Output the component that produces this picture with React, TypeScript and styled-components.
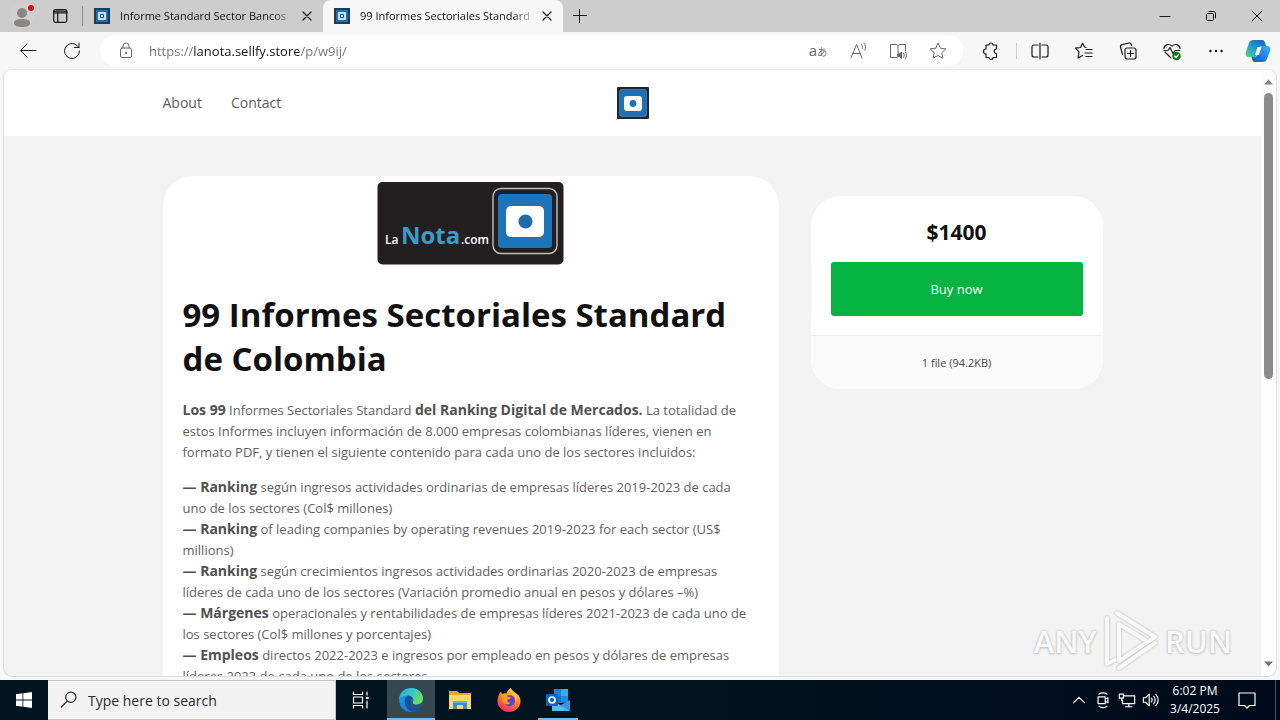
import React from "react";
import styled, { createGlobalStyle } from "styled-components";

const Global = createGlobalStyle`
  *, *::before, *::after { box-sizing: border-box; }
  html, body, #root { height: 100%; margin: 0; }
  body { font-family: "Open Sans", "Noto Sans", sans-serif; font-size: 13px; color: #5a5a5a; overflow: hidden; }
  button, input { font: inherit; color: inherit; border: 0; padding: 0; margin: 0; background: none; }
  p, h1, h2, ul { margin: 0; padding: 0; }
  svg { display: block; flex: none; }
`;

const Desktop = styled.div`
  height: 100vh;
  display: flex;
  flex-direction: column;
  background: #f7f7f7;
`;

/* Browser frame */
const TabStrip = styled.header`
  flex: none;
  height: 32px;
  display: flex;
  background: #cdcdcd;
  color: #111;
`;
const IconButton = styled.button<{ $w?: number; $color?: string }>`
  width: ${(p) => p.$w ?? 40}px;
  flex: none;
  align-self: stretch;
  display: flex;
  align-items: center;
  justify-content: center;
  color: ${(p) => p.$color ?? "#1b1b1b"};
`;
const Rule = styled.span<{ $h: number; $color: string }>`
  width: 1px;
  height: ${(p) => p.$h}px;
  flex: none;
  align-self: center;
  background: ${(p) => p.$color};
`;
const Tab = styled.div<{ $active?: boolean }>`
  width: 240px;
  display: flex;
  align-items: center;
  padding: 0 6px 0 11px;
  border-radius: 8px 8px 0 0;
  background: ${(p) => (p.$active ? "#f7f7f7" : "transparent")};
`;
const TabTitle = styled.button`
  flex: 1;
  min-width: 0;
  margin-left: 10px;
  text-align: left;
  font-size: 11px;
  line-height: 16px;
  white-space: nowrap;
  overflow: hidden;
  mask-image: linear-gradient(to right, #000 86%, transparent);
`;
const Spacer = styled.div<{ $w?: number }>`
  flex: ${(p) => (p.$w ? `0 0 ${p.$w}px` : "1")};
`;
const Toolbar = styled.div`
  flex: none;
  height: 37px;
  display: flex;
  align-items: center;
  padding: 0 2px 0 6px;
`;
const AddressBar = styled.label`
  flex: 1;
  height: 31px;
  margin: 0 6px;
  padding: 0 5px 0 12px;
  display: flex;
  align-items: center;
  background: #fff;
  border-radius: 16px;
`;
const AddressInput = styled.input`
  flex: 1;
  min-width: 0;
  margin-left: 9px;
  height: 20px;
  font-size: 13px;
  outline: none;
  color: transparent;
  background: linear-gradient(to right, #707070 45px, #111 45px, #111 150px, #707070 150px);
  background-clip: text;
  -webkit-background-clip: text;
`;
const TranslateGlyph = styled.span`
  font-size: 15px;
  line-height: 20px;
  small { font-family: "Noto Sans CJK JP", sans-serif; font-size: 10px; }
`;

/* Page */
const Viewport = styled.div`
  flex: 1;
  min-height: 0;
  margin: 0 3px 3px;
  display: flex;
  border: 1px solid #dedede;
  border-top-color: #ececec;
  border-radius: 9px;
  overflow: hidden;
  background: #f3f3f3;
`;
const Page = styled.div`
  flex: 1;
  min-width: 0;
  overflow: hidden;
`;
const Container = styled.div`
  max-width: 940px;
  margin: 0 auto;
`;
const SiteHeader = styled.div`
  background: #fff;
`;
const SiteNav = styled(Container).attrs({ as: "nav" })`
  height: 66px;
  display: grid;
  grid-template-columns: 1fr auto 1fr;
  align-items: center;
`;
const NavLinks = styled.div`
  display: flex;
  gap: 29px;
`;
const NavLink = styled.a`
  color: #5c5c5c;
  font-size: 14px;
  text-decoration: none;
  line-height: 20px;
`;
const Content = styled(Container).attrs({ as: "main" })`
  padding-top: 40px;
  display: grid;
  grid-template-columns: minmax(0, 1fr) 292px;
  gap: 32px;
  align-items: start;
`;
const Article = styled.article`
  padding: 5px 20px 40px;
  background: #fff;
  border-radius: 30px;
`;
const LogoFrame = styled.div`
  display: flex;
  justify-content: center;
`;
const Title = styled.h1`
  margin: 28px 0 19px;
  font-size: 33px;
  line-height: 44px;
  font-weight: 700;
  color: #111;
`;
const Text = styled.p`
  margin-bottom: 14px;
  line-height: 21px;
  color: #5f5f5f;
  strong { font-size: 14px; line-height: 14px; font-weight: 700; color: #505050; }
`;
const BuyCard = styled.aside`
  margin-top: 20px;
  background: #fff;
  border-radius: 30px;
  overflow: hidden;
  text-align: center;
`;
const BuyBody = styled.div`
  padding: 22px 20px 19px;
`;
const Price = styled.h2`
  font-size: 21px;
  line-height: 28px;
  color: #111;
`;
const BuyButton = styled.button`
  width: 100%;
  height: 54px;
  margin-top: 16px;
  border-radius: 3px;
  background: #04b340;
  color: #fff;
`;
const BuyFooter = styled.div`
  padding: 17px 0 16px;
  border-top: 1px solid #eee;
  background: #fafafa;
  font-size: 11px;
  line-height: 20px;
  color: #444;
`;
const Scrollbar = styled.div`
  width: 15px;
  flex: none;
  display: flex;
  flex-direction: column;
  align-items: center;
  padding: 9px 0;
  background: #fcfcfc;
`;
const Track = styled.div`
  flex: 1;
  width: 9px;
  margin: 8px 0;
`;
const Thumb = styled.div`
  height: 51%;
  border-radius: 5px;
  background: #8b8b8b;
`;

const Watermark = styled.div`
  position: absolute;
  right: 48px;
  bottom: 48px;
  display: flex;
  align-items: center;
  gap: 6px;
  font-family: "Open Sans", sans-serif;
  font-size: 31px;
  font-weight: 600;
  line-height: 62px;
  color: #f9f9f9;
  text-shadow: 0 0 2px #b8b8b8, 0 1px 3px #c4c4c4;
  pointer-events: none;
  svg { filter: drop-shadow(0 0 1px #b0b0b0); }
`;

/* Taskbar */
const Taskbar = styled.footer`
  flex: none;
  height: 40px;
  display: flex;
  background: linear-gradient(to right, #00151f, #00131f 55%, #000a1b);
  color: #fff;
`;
const SearchBox = styled.label`
  width: 288px;
  display: flex;
  align-items: center;
  padding-left: 12px;
  background: #f2f2f2;
  border: 1px solid #c6c6c6;
  border-left: 0;
  color: #222;
`;
const SearchInput = styled.input`
  flex: 1;
  min-width: 0;
  margin-left: 10px;
  font-size: 14px;
  outline: none;
  &::placeholder { color: #2a2a2a; opacity: 1; }
`;
const TaskButton = styled.button<{ $w?: number; $active?: boolean; $open?: boolean }>`
  width: ${(p) => p.$w ?? 49}px;
  display: flex;
  align-items: center;
  justify-content: center;
  background: ${(p) => (p.$active ? "#35474f" : "transparent")};
  box-shadow: ${(p) => (p.$active || p.$open ? "inset 0 -2px #76b9ed" : "none")};
  margin: ${(p) => (p.$open ? "0 5px" : "0")};
`;
const Clock = styled.button`
  width: 64px;
  font-size: 12px;
  line-height: 18px;
  color: #fff;
`;

type P = { d: React.ReactNode; s?: number; w?: number; fill?: string };
const Ico = ({ d, s = 20, w = 1, fill = "none" }: P) => (
  <svg width={s} height={s} viewBox="0 0 20 20" fill={fill} stroke="currentColor" strokeWidth={w} strokeLinejoin="round" strokeLinecap="round" aria-hidden="true">
    {d}
  </svg>
);

const Brand = ({ size }: { size: number }) => (
  <svg width={size} height={size} viewBox="0 0 32 32" aria-hidden="true">
    <rect width="32" height="32" rx="1" fill="#20252c" />
    <rect x="2.5" y="2.5" width="27" height="27" rx="2" fill="#1d70b5" stroke="#4d88b8" strokeWidth=".7" />
    <rect x="7" y="9" width="18" height="15" rx="3" fill="#fff" />
    <circle cx="16" cy="16.5" r="3.4" fill="#1d70b5" />
  </svg>
);
const Favicon = () => (
  <svg width="16" height="16" viewBox="0 0 16 16" aria-hidden="true">
    <rect width="16" height="16" fill="#1c3c5c" />
    <rect x="2" y="2" width="12" height="12" fill="#2a6ea6" />
    <rect x="4" y="4" width="8" height="8" rx="1" fill="#bfe3f5" />
    <rect x="6" y="6" width="4" height="4" fill="#1d5f96" />
    <rect x="7" y="7" width="2" height="2" fill="#e8f6fc" />
  </svg>
);

const LaNota = () => (
  <svg width="188" height="84" viewBox="0 0 188 84" role="img" aria-label="La Nota.com">
    <rect x=".5" y="1" width="186" height="82.500" rx="5" fill="#231f20" />
    <g fontFamily='"Open Sans", sans-serif'>
      <text x="8" y="63" fontSize="12" fill="#fff" fontWeight="600">La</text>
      <text x="24" y="63" fontSize="24" fill="#3a9cc8" fontWeight="700">Nota</text>
      <text x="84" y="63" fontSize="12" fill="#fff" fontWeight="600">.com</text>
    </g>
    <rect x="116" y="7.500" width="64" height="65" rx="8" fill="none" stroke="#c4bfbc" strokeWidth="1.4" />
    <rect x="121" y="13" width="54" height="54" rx="4" fill="#1c75bb" />
    <rect x="129" y="25" width="38" height="31" rx="5" fill="#fff" />
    <circle cx="148.500" cy="40.500" r="7" fill="#1f6ba8" />
  </svg>
);

const Copilot = () => (
  <svg width="26" height="24" viewBox="0 0 26 24" aria-hidden="true">
    <defs>
      <linearGradient id="cpA" x1="0" y1="1" x2="1" y2="0"><stop offset="0" stopColor="#5bd68a" /><stop offset=".45" stopColor="#1f9fd0" /><stop offset="1" stopColor="#1657c0" /></linearGradient>
      <linearGradient id="cpB" x1="0" y1="1" x2="1" y2="0"><stop offset="0" stopColor="#1554cf" /><stop offset=".6" stopColor="#2589ee" /><stop offset="1" stopColor="#39b7f2" /></linearGradient>
    </defs>
    <path d="M8 1h9c2 0 2.500 1 3 3l1 3h-4c-2 0-3 1-3.500 3l-1.500 5c-.6 2-1.500 3-3.500 3H4c-3 0-4-2-3-5L4 4c.7-2 2-3 4-3z" fill="url(#cpA)" />
    <path d="M18 23H10c-2 0-2.500-1-3-3l-.6-2H9c2 0 3-1 3.500-3L14 10c.6-2 1.500-3 3.500-3H22c3 0 4 2 3 5l-3 8c-.7 2-2 3-4 3z" fill="url(#cpB)" />
    <path d="M12.500 8h4l-2.600 8h-4z" fill="#f7f7f7" />
  </svg>
);

const Edge = () => (
  <svg width="24" height="24" viewBox="0 0 24 24" aria-hidden="true">
    <defs>
      <linearGradient id="eA" x1="0" y1="0" x2="1" y2=".6"><stop offset="0" stopColor="#2aa5e0" /><stop offset=".5" stopColor="#35c7c8" /><stop offset="1" stopColor="#6be05a" /></linearGradient>
      <linearGradient id="eB" x1="0" y1="0" x2="1" y2="1"><stop offset="0" stopColor="#1b9de2" /><stop offset="1" stopColor="#1173cf" /></linearGradient>
    </defs>
    <circle cx="12" cy="12" r="12" fill="url(#eB)" />
    <path d="M0 11C1 4 6 0 12 0c7 0 12 5 12 10.500 0 4-3 6-6.500 6-3 0-4.500-1-3.500-2.500 2-3-1-6.500-5-6.500C5 7.500 1.500 8.500 0 11z" fill="url(#eA)" />
    <path d="M9 7.500c-3 2-4 5-3 8.500 1 4 4 7 8 8 4-.6 7-2.500 8.500-5.500-4 2-10 1.500-11-3-.5-2 .2-3.500 2.500-4.500-.8-2-2.700-3.500-5-3.500z" fill="#13509f" />
    <path d="M14 14c-1 1.500.5 3 4.500 2.600 2-.3 4-1.500 5-3.600-.1 2-.5 4-1.500 5.500-4 2-10 1.500-11-3-.3-1.300 0-2.500 1-3.500z" fill="#35474f" opacity=".75" />
  </svg>
);
const Explorer = () => (
  <svg width="24" height="20" viewBox="0 0 24 20" aria-hidden="true">
    <path d="M1 1h8l2 2h12v16H1z" fill="#e8a823" />
    <path d="M1 5h22v14H1z" fill="#fbd66c" />
    <path d="M5 19v-8h14v8h-4v-4H9v4z" fill="#3c8dcb" />
    <path d="M5 11h14v2H5z" fill="#63b0e3" />
  </svg>
);
const Firefox = () => (
  <svg width="24" height="24" viewBox="0 0 24 24" aria-hidden="true">
    <defs>
      <linearGradient id="fA" x1=".8" y1="0" x2=".3" y2="1"><stop offset="0" stopColor="#ffe03a" /><stop offset=".45" stopColor="#ff8a22" /><stop offset="1" stopColor="#f5255e" /></linearGradient>
    </defs>
    <path d="M14 0c1 3 4 4 6 6 2 1.500 3.500 4 3.500 7C23.500 19 18.500 24 12 24S.5 19 .5 13C.5 9 2 6 4 3.500L5 6c1.500-1 3-1 4.500-.6C10 3 12 1 14 0z" fill="url(#fA)" />
    <circle cx="12.500" cy="12.500" r="5.500" fill="#6a3fc8" />
    <path d="M4 7c3-1 6 0 7 2l3 .5c-.5 1.500-2 2-3.500 2-1 2 1 3.500 3 3-1 2-5 2.500-7 0C5 12 4.500 9 4 7z" fill="#ff9a25" />
    <path d="M14 5c3 1.500 5 4 4.500 8 1-1 1.500-3 1-5-1-2-3-3-5.500-3z" fill="#ffd53a" />
  </svg>
);
const Outlook = () => (
  <svg width="24" height="22" viewBox="0 0 24 22" aria-hidden="true">
    <path d="M8 0h14v14H8z" fill="#1a6fc0" />
    <path d="M15 0h7v7h-7z" fill="#35aeea" />
    <path d="M8 0h7v7H8z" fill="#1b84d6" />
    <path d="M15 7h7v6h-7z" fill="#1c8ee0" />
    <path d="M6 12l9 4 9-5v9.500c0 1-.6 1.500-1.500 1.500h-15C6.500 22 6 21.500 6 20.500z" fill="#2c9de4" />
    <path d="M6 12l17 9.600c-.2.300-.5.400-1 .4h-14.500C6.500 22 6 21.500 6 20.500z" fill="#50c1f2" />
    <rect y="5" width="12" height="12" rx="1" fill="#0f64b8" />
    <circle cx="6" cy="11" r="3" fill="none" stroke="#fff" strokeWidth="1.700" />
  </svg>
);

const close = <path d="M6 6l8 8M14 6l-8 8" />;
const star = "M10 2.200l2.400 5 5.400.7-4 3.800 1 5.500L10 14.500l-4.800 2.700 1-5.500-4-3.800 5.400-.7z";

export default function App() {
  return (
    <Desktop>
      <Global />
      <TabStrip>
        <IconButton $w={43} aria-label="Profile">
          <svg width="26" height="26" viewBox="0 0 26 26" aria-hidden="true">
            <circle cx="13" cy="12" r="13" fill="#d2d0cf" />
            <circle cx="13" cy="10" r="5" fill="#8b8785" />
            <path d="M5 20c0-3 3-4 8-4s8 1 8 4-3 4-8 4-8-1-8-4z" fill="#8b8785" />
            <circle cx="22" cy="5" r="3" fill="#d90d1e" />
          </svg>
        </IconButton>
        <IconButton $w={34} aria-label="Workspaces">
          <Ico s={18} w={1.4} d={<><rect x="3" y="3" width="14.500" height="14" rx="2" /><path d="M3 4.500h14.500v2H3zM7.500 6v11" /></>} />
        </IconButton>
        <Spacer $w={5} />
        <Rule $h={20} $color="#8f8f8f" />
        <Tab>
          <Favicon />
          <TabTitle>Informe Standard Sector Bancos</TabTitle>
          <IconButton $w={20} aria-label="Close tab"><Ico s={20} w={1.2} d={close} /></IconButton>
        </Tab>
        <Tab $active>
          <Favicon />
          <TabTitle>99 Informes Sectoriales Standard</TabTitle>
          <IconButton $w={20} aria-label="Close tab"><Ico s={20} w={1.2} d={close} /></IconButton>
        </Tab>
        <IconButton $w={34} aria-label="New tab"><Ico d={<path d="M3.500 9.500h13M9.500 3.500v13" />} /></IconButton>
        <Spacer />
        <IconButton $w={46} aria-label="Minimize"><Ico d={<path d="M5 10.500h10" />} /></IconButton>
        <IconButton $w={46} aria-label="Restore"><Ico d={<><rect x="5.500" y="7.500" width="7" height="7" rx="1" /><path d="M8 5.500h4.500a2 2 0 0 1 2 2V12" /></>} /></IconButton>
        <IconButton $w={46} aria-label="Close"><Ico d={<path d="M5 5l10 10M15 5L5 15" />} /></IconButton>
      </TabStrip>

      <Toolbar>
        <IconButton $w={44} aria-label="Back"><Ico d={<path d="M18 9.500H2.500M9 3L2.500 9.500 9 16" />} /></IconButton>
        <IconButton $w={44} aria-label="Refresh"><Ico d={<path d="M17.500 10a7.500 7.500 0 1 1-2.500-5.600L17 6.500M17 2v4.500h-4.500" />} /></IconButton>
        <AddressBar>
          <IconButton $w={28} $color="#666" as="span"><Ico d={<><rect x="4.500" y="7" width="11" height="9.500" rx="1.500" /><path d="M7 7V5a3 3 0 0 1 6 0v2" /><circle cx="10" cy="12" r=".6" fill="currentColor" /></>} /></IconButton>
          <AddressInput aria-label="Address" defaultValue="https://lanota.sellfy.store/p/w9ij/" />
          <IconButton $color="#666" aria-label="Translate"><TranslateGlyph>a<small>あ</small></TranslateGlyph></IconButton>
          <IconButton $color="#666" aria-label="Read aloud"><Ico d={<path d="M3 17L8.500 3.500 14 17M5 12.500h7M13.500 3.500c1 1.200 1.200 2.800.5 4M16 2c1.800 2 2 4.600.8 7" />} /></IconButton>
          <IconButton $color="#666" aria-label="Immersive reader"><Ico d={<><path d="M9 16.500H2.500v-13H8c1 0 2 .5 2 1.500V16M10 5c0-1 1-1.500 2-1.500h5.500V10" /><path d="M10 13h1.500l2-2v6.500l-2-2H10z" fill="currentColor" /><path d="M15.500 12c1 1.500 1 3 0 4.500M17.500 11c1.300 2 1.300 4.500 0 6.500" /></>} /></IconButton>
          <IconButton $color="#666" aria-label="Favorite"><Ico d={<path d={star} />} /></IconButton>
        </AddressBar>
        <IconButton $w={44} aria-label="Extensions"><Ico w={1.2} d={<path d="M5 4h3a2 2 0 0 1 4 0h3.500v4a1.600 1.600 0 0 0 0 4.500V16.500H12a2 2 0 0 1-4 0H5V13a2 2 0 1 1 0-5z" />} /></IconButton>
        <Spacer $w={3} />
        <Rule $h={16} $color="#cfcfcf" />
        <IconButton $w={45} aria-label="Split screen"><Ico w={1.2} d={<path d="M8 4H4a2 2 0 0 0-2 2v8a2 2 0 0 0 2 2h4M12 4h4a2 2 0 0 1 2 2v8a2 2 0 0 1-2 2h-4M10 2v16" />} /></IconButton>
        <IconButton $w={44} aria-label="Favorites"><Ico w={1.2} d={<path d="M12 6.500L10.500 6 8.500 2.200 6.500 6.500l-5 .7L5 11l-1 6 4.500-2.500M12 8.500h6M11 12h7M12 15.500h6" />} /></IconButton>
        <IconButton $w={44} aria-label="Collections"><Ico w={1.2} d={<><rect x="7" y="7" width="11" height="11" rx="2" /><path d="M12.500 9.500v6M9.500 12.500h6M4.500 13.500L2.500 6a2 2 0 0 1 1.500-2.300L11 2a2 2 0 0 1 2.300 1.500l.3 1.200" /></>} /></IconButton>
        <IconButton $w={44} aria-label="Browser essentials">
          <Ico w={1.2} d={<><path d="M2 7.500C2 4 6.500 2 10 5c3.500-3 8-1 8 2.500M3 11l6 6M2 9.500h4l2-3 3 6 2-3h5" /><circle cx="14.500" cy="15" r="4.300" fill="#107c10" stroke="none" /><path d="M12.500 15l1.500 1.500 2.500-3" stroke="#fff" /></>} />
        </IconButton>
        <IconButton $w={44} aria-label="More"><Ico w={0} d={<g fill="#111"><circle cx="4.500" cy="10" r="1.200" /><circle cx="10" cy="10" r="1.200" /><circle cx="15.500" cy="10" r="1.200" /></g>} /></IconButton>
        <IconButton $w={40} aria-label="Copilot"><Copilot /></IconButton>
      </Toolbar>

      <Viewport>
        <Page>
          <SiteHeader>
            <SiteNav>
              <NavLinks>
                <NavLink href="#about">About</NavLink>
                <NavLink href="#contact">Contact</NavLink>
              </NavLinks>
              <NavLink href="#home" aria-label="La Nota"><Brand size={32} /></NavLink>
            </SiteNav>
          </SiteHeader>
          <Content>
            <Article>
              <LogoFrame><LaNota /></LogoFrame>
              <Title>99 Informes Sectoriales Standard de Colombia</Title>
              <Text>
                <strong>Los 99</strong> Informes Sectoriales Standard <strong>del Ranking Digital de Mercados.</strong> La totalidad de<br />
                estos Informes incluyen información de 8.000 empresas colombianas líderes, vienen en<br />
                formato PDF, y tienen el siguiente contenido para cada uno de los sectores incluidos:
              </Text>
              <Text>
                <strong>— Ranking</strong> según ingresos actividades ordinarias de empresas líderes 2019-2023 de cada<br />uno de los sectores (Col$ millones)<br />
                <strong>— Ranking</strong> of leading companies by operating revenues 2019-2023 for each sector (US$<br />millions)<br />
                <strong>— Ranking</strong> según crecimientos ingresos actividades ordinarias 2020-2023 de empresas<br />líderes de cada uno de los sectores (Variación promedio anual en pesos y dólares –%)<br />
                <strong>— Márgenes</strong> operacionales y rentabilidades de empresas líderes 2021-2023 de cada uno de<br />los sectores (Col$ millones y porcentajes)<br />
                <strong>— Empleos</strong> directos 2022-2023 e ingresos por empleado en pesos y dólares de empresas<br />líderes 2023 de cada uno de los sectores
              </Text>
            </Article>
            <BuyCard>
              <BuyBody>
                <Price>$1400</Price>
                <BuyButton>Buy now</BuyButton>
              </BuyBody>
              <BuyFooter>1 file (94.2KB)</BuyFooter>
            </BuyCard>
          </Content>
        </Page>
        <Scrollbar>
          <svg width="9" height="6" viewBox="0 0 9 6" aria-hidden="true"><path d="M0 5.500L4.500.5 9 5.500z" fill="#858585" /></svg>
          <Track><Thumb /></Track>
          <svg width="9" height="6" viewBox="0 0 9 6" aria-hidden="true"><path d="M0 .5L4.500 5.500 9 .5z" fill="#757575" /></svg>
        </Scrollbar>
      </Viewport>

      <Watermark>
        <span>ANY</span>
        <svg width="56" height="62" viewBox="0 0 56 62" fill="none" stroke="#f9f9f9" strokeWidth="4" strokeLinejoin="round" strokeLinecap="round" aria-hidden="true">
          <path d="M4 8v46l8-4" />
          <path d="M14 3l38 24-36 24V14l26 16" />
          <path d="M16 58l36-25" />
        </svg>
        <span>RUN</span>
      </Watermark>

      <Taskbar>
        <TaskButton $w={48} aria-label="Start">
          <svg width="16" height="16" viewBox="0 0 16 16" fill="#fff" aria-hidden="true"><path d="M0 2.200L6.500 1.300v6.300H0zM7.300 1.200L16 0v7.600H7.300zM0 8.400h6.500v6.300L0 13.800zM7.300 8.400H16V16l-8.700-1.200z" /></svg>
        </TaskButton>
        <SearchBox>
          <Ico s={18} w={1.3} d={<><circle cx="12" cy="7" r="5.700" /><path d="M8 11.200L1.500 17.800" /></>} />
          <SearchInput aria-label="Search" placeholder="Type here to search" />
        </SearchBox>
        <TaskButton $w={51} aria-label="Task view"><Ico s={20} w={1.2} d={<path d="M1.500 2v2.500h9V2M1.500 7h9v6h-9zM1.500 18v-2.500h9V18M15 2v3M15 11v7M14.500 7.500h1.500v1h-1.500z" />} /></TaskButton>
        <TaskButton $w={48} $active aria-label="Edge"><Edge /></TaskButton>
        <TaskButton aria-label="File Explorer"><Explorer /></TaskButton>
        <TaskButton aria-label="Firefox"><Firefox /></TaskButton>
        <TaskButton $w={40} $open aria-label="Outlook"><Outlook /></TaskButton>
        <Spacer />
        <IconButton $w={24} $color="#fff" aria-label="Hidden icons"><Ico s={18} w={1.3} d={<path d="M4 13l6-6 6 6" />} /></IconButton>
        <IconButton $w={24} $color="#fff" aria-label="Meet now"><Ico s={18} w={1.3} d={<path d="M5.500 3.500c2.500-2 6.500-2 9 0M5.500 17c2.500 2 6.500 2 9 0M4.500 6.500h8v7.500h-8zM12.500 9l3-1.500v5.500l-3-1.500" />} /></IconButton>
        <IconButton $w={24} $color="#fff" aria-label="Network"><Ico s={18} w={1.3} d={<path d="M7 5.500h11.500v8.500H5V10M12 14v3.500M8.500 17.500h7M1.500 3.500H6V8H1.500zM4 8v2.500" />} /></IconButton>
        <IconButton $w={24} $color="#fff" aria-label="Volume"><Ico s={18} w={1.3} d={<path d="M1.500 7.500H4L8 3.500v13L4 12.500H1.500zM10.500 8c1 1.200 1 2.800 0 4M13 6c2 2.400 2 5.600 0 8M15.500 4c3 3.600 3 8.400 0 12" />} /></IconButton>
        <Clock>6:02 PM<br />3/4/2025</Clock>
        <IconButton $w={40} $color="#fff" aria-label="Notifications"><Ico s={20} w={1.2} d={<path d="M2 3h16v12.500h-5.500L10 18l-2.500-2.500H2z" />} /></IconButton>
        <Spacer $w={8} />
        <Rule $h={40} $color="#4b5560" />
        <Spacer $w={4} />
      </Taskbar>
    </Desktop>
  );
}
